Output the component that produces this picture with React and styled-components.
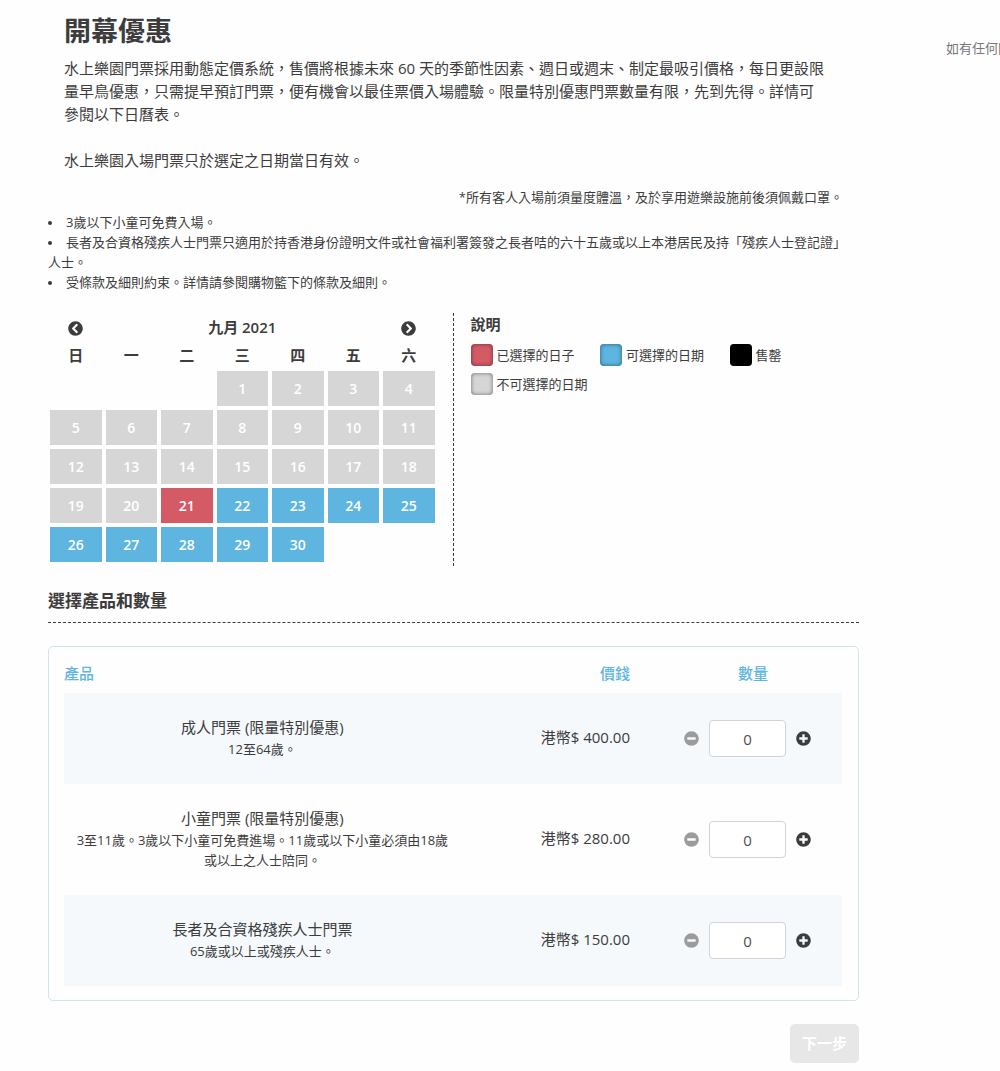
import React, { useState } from "react";
import styled, { createGlobalStyle } from "styled-components";
import {
  FaChevronCircleLeft,
  FaChevronCircleRight,
  FaMinusCircle,
  FaPlusCircle,
} from "react-icons/fa";

const GlobalStyle = createGlobalStyle`
  * {
    box-sizing: border-box;
  }
  body {
    margin: 0;
    background: #fefefe;
    color: #3c3c3c;
    font-family: "Open Sans", "Noto Sans CJK TC", sans-serif;
    font-size: 15px;
    line-height: 23px;
  }
  button, input {
    font: inherit;
    color: inherit;
  }
`;

const PageStyled = styled.div`
  display: grid;
  grid-template-columns: minmax(0, 1fr) 54px;
  column-gap: 87px;
  padding: 14px 0 8px 48px;
  overflow: hidden;
`;
const IntroStyled = styled.header`
  padding: 0 16px;
  h1 {
    margin: 0 0 9px;
    font-size: 27px;
    font-weight: bold;
    line-height: 34px;
  }
  p {
    margin: 0 0 23px;
  }
  p:last-child {
    margin-bottom: 15px;
  }
`;
const NoteStyled = styled.p`
  margin: 0 0 5px;
  padding-right: 16px;
  font-size: 13px;
  line-height: 20px;
  text-align: right;
`;
const TermListStyled = styled.ul`
  margin: 0 0 21px;
  padding: 0 4px 0 0;
  list-style: none;
  font-size: 13px;
  line-height: 20px;
  li::before {
    content: "";
    display: inline-block;
    width: 4px;
    height: 4px;
    margin-right: 14px;
    border-radius: 50%;
    background: #3c3c3c;
    vertical-align: 2px;
  }
`;
const DatePickerStyled = styled.section`
  display: grid;
  grid-template-columns: repeat(2, minmax(0, 1fr));
`;
const CalendarPaneStyled = styled.div`
  padding: 0 16px 2px 0;
  border-right: 1px dashed #3c3c3c;
`;
const CalendarStyled = styled.table`
  width: 100%;
  table-layout: fixed;
  border-collapse: collapse;
  text-align: center;
  th {
    height: 28px;
    padding: 0;
    font-weight: 600;
  }
  td {
    height: 39px;
    padding: 2px;
  }
`;
const DAY_COLORS = {
  selected: "#d45b66",
  available: "#5db5e0",
  soldout: "#000",
  disabled: "#d6d6d6",
};
const DayButton = styled.button`
  display: block;
  width: 100%;
  height: 35px;
  padding: 0;
  border: 0;
  background: ${({ $status }) => DAY_COLORS[$status]};
  color: #fff;
  font-size: 14px;
  font-weight: 600;
  cursor: ${({ $status }) => ($status === "disabled" ? "default" : "pointer")};
`;
const IconButton = styled.button`
  display: inline-flex;
  padding: 0;
  border: 0;
  background: none;
  font-size: 15px;
  vertical-align: middle;
  cursor: pointer;
  &:disabled {
    color: #9b9b9b;
    cursor: default;
  }
`;
const LegendStyled = styled.div`
  padding-left: 17px;
  h2 {
    margin: 0 0 8px;
    font-size: 15px;
    font-weight: bold;
    line-height: 23px;
  }
  ul {
    display: grid;
    grid-template-columns: repeat(3, 1fr);
    row-gap: 7px;
    margin: 0;
    padding: 0;
    list-style: none;
  }
  li {
    display: flex;
    align-items: center;
    gap: 4px;
    font-size: 13px;
    line-height: 22px;
    white-space: nowrap;
  }
`;
const SwatchStyled = styled.span`
  width: 22px;
  height: 22px;
  border-radius: 4px;
  background: ${({ $status }) => DAY_COLORS[$status]};
  box-shadow: inset 0 0 4px rgba(0, 0, 0, 0.5);
`;
const SectionTitle = styled.h2`
  margin: 23px 0;
  padding-bottom: 9px;
  border-bottom: 1px dashed #3c3c3c;
  font-size: 17px;
  font-weight: bold;
  line-height: 24px;
`;
const CardStyled = styled.div`
  padding: 16px 16px 14px 15px;
  border: 1px solid #cfe6ea;
  border-radius: 5px;
`;
const ProductTable = styled.table`
  width: 100%;
  table-layout: fixed;
  border-collapse: collapse;
  th {
    padding: 0 0 10px;
    color: #5db5e0;
    font-weight: 500;
    line-height: 20px;
    text-align: center;
  }
  th:first-child {
    width: 51%;
    text-align: left;
  }
  th:last-child {
    width: 178px;
  }
  tbody tr:nth-child(odd) {
    background: #f5f9fc;
  }
  td {
    padding: 23px 12px 25px;
    text-align: center;
  }
  th:nth-child(2),
  td:nth-child(2) {
    padding-right: 34px;
    text-align: right;
  }
  td:last-child {
    padding: 0 0 0 20px;
  }
  small {
    display: block;
    font-size: 13px;
    line-height: 20px;
  }
`;
const StepperStyled = styled.div`
  display: flex;
  align-items: center;
  gap: 10px;
`;
const QuantityInput = styled.input`
  width: 77px;
  height: 37px;
  padding: 0;
  border: 1px solid #ced4da;
  border-radius: 4px;
  background: #fff;
  color: #495057;
  text-align: center;
`;
const ActionsStyled = styled.div`
  display: flex;
  justify-content: flex-end;
  margin-top: 23px;
`;
const NextButton = styled.button`
  padding: 8px 12px;
  border: 0;
  border-radius: 5px;
  background: #5db5e0;
  color: #fff;
  font-weight: bold;
  cursor: pointer;
  &:disabled {
    background: #e7e7e7;
    cursor: default;
  }
`;
const AsideStyled = styled.aside`
  padding-top: 24px;
  overflow: hidden;
  color: #74787d;
  font-size: 13px;
  line-height: 20px;
  white-space: nowrap;
`;

const WEEKDAYS = ["日", "一", "二", "三", "四", "五", "六"];
const FIRST_WEEKDAY = 3;
const DAYS_IN_MONTH = 30;
const FIRST_OPEN_DAY = 21;

const LEGENDS = [
  { status: "selected", label: "已選擇的日子" },
  { status: "available", label: "可選擇的日期" },
  { status: "soldout", label: "售罄" },
  { status: "disabled", label: "不可選擇的日期" },
];

const PRODUCTS = [
  {
    id: "adult",
    name: "成人門票 (限量特別優惠)",
    description: "12至64歲。",
    price: 400,
  },
  {
    id: "child",
    name: "小童門票 (限量特別優惠)",
    description: "3至11歲。3歲以下小童可免費進場。11歲或以下小童必須由18歲或以上之人士陪同。",
    price: 280,
  },
  {
    id: "senior",
    name: "長者及合資格殘疾人士門票",
    description: "65歲或以上或殘疾人士。",
    price: 150,
  },
];

// weeks of the month, null where the cell is empty
const weeks = [];
for (let start = 1 - FIRST_WEEKDAY; start <= DAYS_IN_MONTH; start += 7) {
  weeks.push(
    WEEKDAYS.map((_, i) => {
      const day = start + i;
      return day >= 1 && day <= DAYS_IN_MONTH ? day : null;
    })
  );
}

function Calendar({ selectedDay, onSelect }) {
  const getStatus = (day) => {
    if (day === selectedDay) return "selected";
    return day < FIRST_OPEN_DAY ? "disabled" : "available";
  };
  return (
    <CalendarStyled>
      <thead>
        <tr>
          <th>
            <IconButton type="button" aria-label="上個月">
              <FaChevronCircleLeft />
            </IconButton>
          </th>
          <th colSpan={5}>九月 2021</th>
          <th>
            <IconButton type="button" aria-label="下個月">
              <FaChevronCircleRight />
            </IconButton>
          </th>
        </tr>
        <tr>
          {WEEKDAYS.map((name) => (
            <th key={name} scope="col">
              {name}
            </th>
          ))}
        </tr>
      </thead>
      <tbody>
        {weeks.map((week, index) => (
          <tr key={index}>
            {week.map((day, i) => (
              <td key={i}>
                {day && (
                  <DayButton
                    type="button"
                    $status={getStatus(day)}
                    disabled={day < FIRST_OPEN_DAY}
                    onClick={() => onSelect(day)}
                  >
                    {day}
                  </DayButton>
                )}
              </td>
            ))}
          </tr>
        ))}
      </tbody>
    </CalendarStyled>
  );
}

function Stepper({ label, value, onChange }) {
  return (
    <StepperStyled>
      <IconButton
        type="button"
        aria-label="減少"
        disabled={value === 0}
        onClick={() => onChange(value - 1)}
      >
        <FaMinusCircle />
      </IconButton>
      <QuantityInput
        type="text"
        inputMode="numeric"
        aria-label={label}
        value={value}
        onChange={(e) => onChange(Number(e.target.value.replace(/\D/g, "")))}
      />
      <IconButton
        type="button"
        aria-label="增加"
        onClick={() => onChange(value + 1)}
      >
        <FaPlusCircle />
      </IconButton>
    </StepperStyled>
  );
}

export default function App() {
  const [selectedDay, setSelectedDay] = useState(21);
  const [quantities, setQuantities] = useState({ adult: 0, child: 0, senior: 0 });

  const handleQuantityChange = (id, value) => {
    setQuantities({ ...quantities, [id]: value });
  };
  const isEmpty = Object.values(quantities).every((value) => value === 0);

  return (
    <PageStyled>
      <GlobalStyle />
      <main>
        <IntroStyled>
          <h1>開幕優惠</h1>
          <p>
            水上樂園門票採用動態定價系統，售價將根據未來 60 天的季節性因素、週日或週末、制定最吸引價格，每日更設限
            <br />
            量早鳥優惠，只需提早預訂門票，便有機會以最佳票價入場體驗。限量特別優惠門票數量有限，先到先得。詳情可
            <br />
            參閱以下日曆表。
          </p>
          <p>水上樂園入場門票只於選定之日期當日有效。</p>
        </IntroStyled>
        <NoteStyled>*所有客人入場前須量度體溫，及於享用遊樂設施前後須佩戴口罩。</NoteStyled>
        <TermListStyled>
          <li>3歲以下小童可免費入場。</li>
          <li>
            長者及合資格殘疾人士門票只適用於持香港身份證明文件或社會福利署簽發之長者咭的六十五歲或以上本港居民及持「殘疾人士登記證」人士。
          </li>
          <li>受條款及細則約束。詳情請參閱購物籃下的條款及細則。</li>
        </TermListStyled>
        <DatePickerStyled>
          <CalendarPaneStyled>
            <Calendar selectedDay={selectedDay} onSelect={setSelectedDay} />
          </CalendarPaneStyled>
          <LegendStyled>
            <h2>說明</h2>
            <ul>
              {LEGENDS.map((legend) => (
                <li key={legend.status}>
                  <SwatchStyled $status={legend.status} />
                  {legend.label}
                </li>
              ))}
            </ul>
          </LegendStyled>
        </DatePickerStyled>
        <SectionTitle>選擇產品和數量</SectionTitle>
        <CardStyled>
          <ProductTable>
            <thead>
              <tr>
                <th scope="col">產品</th>
                <th scope="col">價錢</th>
                <th scope="col">數量</th>
              </tr>
            </thead>
            <tbody>
              {PRODUCTS.map((product) => (
                <tr key={product.id}>
                  <td>
                    {product.name}
                    <small>{product.description}</small>
                  </td>
                  <td>港幣$ {product.price.toFixed(2)}</td>
                  <td>
                    <Stepper
                      label={product.name}
                      value={quantities[product.id]}
                      onChange={(value) => handleQuantityChange(product.id, value)}
                    />
                  </td>
                </tr>
              ))}
            </tbody>
          </ProductTable>
        </CardStyled>
        <ActionsStyled>
          <NextButton type="button" disabled={isEmpty}>
            下一步
          </NextButton>
        </ActionsStyled>
      </main>
      <AsideStyled>如有任何問</AsideStyled>
    </PageStyled>
  );
}
